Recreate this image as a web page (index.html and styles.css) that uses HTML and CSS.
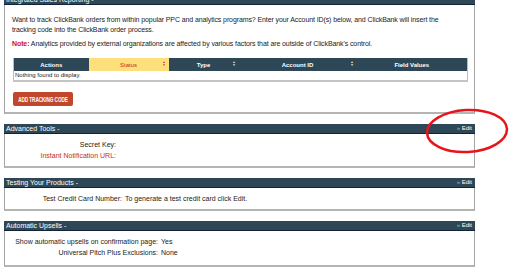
FILE: index.html
```html
<!DOCTYPE html>
<html lang="en">
<head>
  <meta charset="UTF-8" />
  <title>Account Settings</title>
  <link rel="stylesheet" href="styles.css">
</head>
<body>

  <div class="page">

    <div class="panel panel-first">
      <div class="panel-head">Integrated Sales Reporting -</div>
      <div class="panel-body intro">
        <p>Want to track ClickBank orders from within popular PPC and analytics programs? Enter your Account ID(s) below, and ClickBank will insert the tracking code into the ClickBank order process.</p>
        <p class="note"><span class="red">Note:</span> Analytics provided by external organizations are affected by various factors that are outside of ClickBank's control.</p>

        <table class="grid">
          <thead>
            <tr>
              <th class="c-actions">Actions</th>
              <th class="c-status sorted">Status <span class="sort">&#9650;<br>&#9660;</span></th>
              <th class="c-type">Type <span class="sort">&#9650;<br>&#9660;</span></th>
              <th class="c-account">Account ID <span class="sort">&#9650;<br>&#9660;</span></th>
              <th class="c-fields">Field Values</th>
            </tr>
          </thead>
          <tbody>
            <tr><td colspan="5">Nothing found to display.</td></tr>
          </tbody>
        </table>

        <button class="btn-add"><span>ADD TRACKING CODE</span></button>
      </div>
    </div>

    <div class="panel">
      <div class="panel-head">Advanced Tools - <a class="edit"><span class="arrow">&raquo;</span> Edit</a></div>
      <div class="panel-body">
        <div class="fields fields-adv">
          <span class="label">Secret Key:</span><span></span>
          <span class="label red">Instant Notification URL:</span><span></span>
        </div>
      </div>
    </div>

    <div class="panel">
      <div class="panel-head">Testing Your Products - <a class="edit"><span class="arrow">&raquo;</span> Edit</a></div>
      <div class="panel-body">
        <div class="fields fields-test">
          <span class="label">Test Credit Card Number:</span><span>To generate a test credit card click Edit.</span>
        </div>
      </div>
    </div>

    <div class="panel">
      <div class="panel-head">Automatic Upsells - <a class="edit"><span class="arrow">&raquo;</span> Edit</a></div>
      <div class="panel-body upsells">
        <div class="fields fields-upsell">
          <span class="label">Show automatic upsells on confirmation page:</span><span>Yes</span>
          <span class="label">Universal Pitch Plus Exclusions:</span><span>None</span>
        </div>
      </div>
    </div>

  </div>

  <!-- red circle drawn over the Edit link -->
  <svg class="circle" width="90" height="50" viewBox="0 0 90 50">
    <ellipse cx="44" cy="23" rx="40" ry="21" fill="none" stroke="#e8141b" stroke-width="2.5" transform="rotate(-3 44 23)" />
  </svg>

</body>
</html>
```

FILE: styles.css
```css
* { margin: 0; padding: 0; box-sizing: border-box; }
html, body {
  background: #fff;
  color: #222;
  font-family: "Liberation Sans", Arial, sans-serif;
  font-size: 7px;
  line-height: 10px;
  overflow: hidden;
}

.page {
  width: 471px;
  margin-left: 4px;
  margin-top: -5px;
}

.panel {
  border: 1px solid #a4a4a4;
  border-top: none;
  border-bottom: 2px solid #b4b4b4;
  margin-bottom: 10px;
  background: #fff;
}

.panel-head {
  display: flex;
  justify-content: space-between;
  background: #2d4757;
  border-bottom: 1px solid #142238;
  color: #fff;
  height: 10px;
  line-height: 9px;
  padding: 0 3px 0 2px;
  font-size: 7px;
  margin: 0 -1px;
}

.edit {
  color: #fff;
  font-size: 6px;
}

.edit .arrow {
  color: #aab4bb;
}

.panel-body {
  padding: 6px 8px 5px 8px;
}

.intro {
  padding: 10px 6px 6px 7px;
}

.intro p { letter-spacing: -0.1px; max-width: 445px; }

.upsells { padding-bottom: 7px; }

.note { margin-top: 4px; }

.red { color: #c0301c; }
.note .red { font-weight: bold; color: #d0101a; }

.grid {
  margin-top: 9px;
  width: 455px;
  margin-left: 1px;
  border-collapse: collapse;
  border: 1px solid #bcbcbc;
  border-top: none;
  border-bottom: 2px solid #c4c4c4;
}

.grid th {
  background: #2d4757;
  color: #fff;
  font-size: 6px;
  font-weight: bold;
  height: 13px;
  position: relative;
  text-align: center;
}

.grid th.sorted {
  background: #fde07c;
  color: #c0301c;
  font-weight: normal;
}

.sort {
  position: absolute;
  right: 3px;
  top: 3px;
  font-size: 3px;
  line-height: 3px;
  color: #fff;
}

.sorted .sort { color: #d0101a; }

.c-actions { width: 75px; }
.c-status { width: 80px; }
.c-type { width: 70px; }
.c-account { width: 118px; }

.grid td {
  font-size: 6px;
  line-height: 9px;
  padding-left: 1px;
  color: #222;
}

.btn-add {
  display: flex;
  align-items: center;
  justify-content: center;
  margin: 10px 0 0 1px;
  width: 60px;
  height: 14px;
  border: none;
  border-radius: 2px;
  background: #c1472c;
  color: #fff;
  font-family: "Liberation Sans", Arial, sans-serif;
  font-weight: bold;
  font-size: 7.5px;
  white-space: nowrap;
}

.btn-add span {
  display: inline-block;
  transform: scaleX(0.62);
  letter-spacing: -0.1px;
}

.fields {
  display: grid;
  column-gap: 3px;
  row-gap: 1px;
}

.fields .label { text-align: right; }

.fields-adv { grid-template-columns: 103px 1fr; }
.fields-test { grid-template-columns: 109px 1fr; }
.fields-upsell { grid-template-columns: 145px 1fr; }

.circle {
  position: absolute;
  left: 423px;
  top: 108px;
}
```
